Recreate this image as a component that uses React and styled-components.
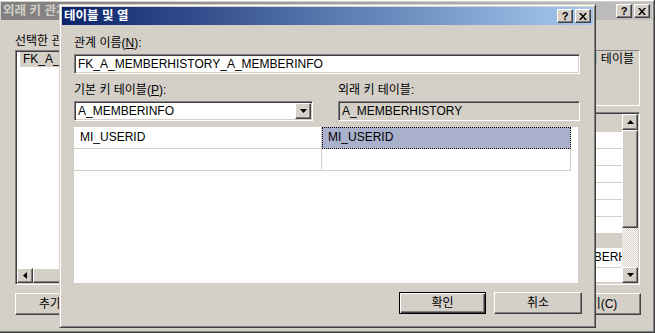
import styled, { createGlobalStyle, css } from "styled-components";

const FACE = "#d4d0c8";

const GlobalStyle = createGlobalStyle`
  html, body {
    margin: 0;
    padding: 0;
    background: #d4d0c8;
    overflow: hidden;
  }
  body {
    font-family: "Liberation Sans", "Noto Sans CJK KR", sans-serif;
    font-size: 12px;
    line-height: 14px;
    color: #000;
  }
`;

const raised = css`
  border: 1px solid;
  border-color: #fff #404040 #404040 #fff;
  box-shadow: inset -1px -1px #808080;
  background: ${FACE};
`;

const sunken = css`
  border: 1px solid;
  border-color: #808080 #fff #fff #808080;
  box-shadow: inset 1px 1px #404040, inset -1px -1px ${FACE};
`;

const Desktop = styled.div`
  position: relative;
  width: 655px;
  height: 333px;
  overflow: hidden;
`;

const Window = styled.div`
  position: absolute;
  left: ${p => p.$x}px;
  top: ${p => p.$y}px;
  width: ${p => p.$w}px;
  height: ${p => p.$h}px;
  box-sizing: border-box;
  display: flex;
  flex-direction: column;
  padding: 2px;
  background: ${FACE};
  border: 1px solid;
  border-color: ${FACE} #404040 #404040 ${FACE};
  box-shadow: inset 1px 1px #fff, inset -1px -1px #808080;
`;

const TitleBar = styled.div`
  flex: none;
  height: 18px;
  display: flex;
  align-items: center;
  justify-content: space-between;
  padding: 0 2px;
  background: ${p => p.$active
    ? "linear-gradient(to right, #0a246a, #a6caf0)"
    : "linear-gradient(to right, #808080, #c0c0c0)"};
  color: ${p => (p.$active ? "#fff" : FACE)};
  font-weight: bold;
  font-size: 12.5px;
  white-space: nowrap;
`;

const TitleButtons = styled.div`
  display: flex;
  gap: 2px;
`;

const CaptionButton = styled.div`
  ${raised};
  box-sizing: border-box;
  width: 16px;
  height: 14px;
  display: flex;
  align-items: center;
  justify-content: center;
  color: #000;
  font-family: "Liberation Sans", sans-serif;
  font-size: 11px;
  font-weight: bold;
  line-height: 12px;
`;

const BackBody = styled.div`
  flex: 1;
  display: flex;
  justify-content: space-between;
  padding: 14px 11px 0 14px;
`;

const Column = styled.div`
  display: flex;
  flex-direction: column;
  width: ${p => p.$w}px;
  padding-top: ${p => p.$top || 0}px;
`;

const Label = styled.div`
  height: 14px;
  line-height: 14px;
  margin-bottom: ${p => p.$gap ?? 4}px;
  white-space: nowrap;
`;

const ListBox = styled.div`
  ${sunken};
  box-sizing: border-box;
  height: 235px;
  background: #fff;
  display: flex;
  flex-direction: column;
  padding: 1px;
`;

const ListItems = styled.div`
  flex: 1;
  overflow: hidden;
`;

const ListItem = styled.div`
  margin-left: 3px;
  padding-left: 3px;
  height: 15px;
  line-height: 15px;
  white-space: nowrap;
  background: ${p => (p.$selected ? FACE : "transparent")};
`;

const HScroll = styled.div`
  display: flex;
  height: 15px;
`;

const ScrollButton = styled.div`
  ${raised};
  box-sizing: border-box;
  flex: none;
  width: 16px;
  height: ${p => p.$h || 16}px;
  display: flex;
  align-items: center;
  justify-content: center;
`;

const Thumb = styled.div`
  ${raised};
  box-sizing: border-box;
  flex: none;
  width: ${p => (p.$w ? `${p.$w}px` : "auto")};
  height: ${p => (p.$h ? `${p.$h}px` : "auto")};
`;

const Track = styled.div`
  flex: 1;
  background: repeating-conic-gradient(#ffffff 0 25%, ${FACE} 0 50%) 0 0 / 2px 2px;
`;

const PushButton = styled.button`
  ${raised};
  box-sizing: border-box;
  width: ${p => p.$w}px;
  height: 22px;
  padding: 0;
  font: inherit;
  color: #000;
  white-space: nowrap;
  align-self: ${p => p.$align || "auto"};
  margin-top: ${p => p.$top || 0}px;
  ${p => p.$default && css`
    border-color: #000;
    box-shadow: inset 1px 1px #fff, inset -1px -1px #404040, inset -2px -2px #808080;
  `}
`;

const InfoBox = styled.div`
  box-sizing: border-box;
  height: 56px;
  margin: 0 1px 6px 0;
  border: 1px solid;
  border-color: #808080 #fff #fff #808080;
  padding: 1px 5px 0 0;
  text-align: right;
  white-space: nowrap;
`;

const PropGrid = styled.div`
  ${sunken};
  box-sizing: border-box;
  height: 173px;
  margin-right: 1px;
  padding: 1px;
  display: flex;
  background: ${FACE};
`;

const PropRows = styled.div`
  flex: 1;
  overflow: hidden;
  display: flex;
  flex-direction: column;
`;

const PropRow = styled.div`
  box-sizing: border-box;
  flex: none;
  height: ${p => p.$h}px;
  line-height: ${p => p.$h - 1}px;
  padding-left: 1px;
  white-space: nowrap;
  background: ${p => (p.$gray ? FACE : "#fff")};
  border-bottom: ${p => (p.$gray ? "none" : `1px solid ${FACE}`)};
`;

const VScroll = styled.div`
  width: 16px;
  display: flex;
  flex-direction: column;
`;

const FrontBody = styled.div`
  flex: 1;
  display: flex;
  flex-direction: column;
  padding: 11px 13px 0 12px;
`;

const Field = styled.div`
  ${sunken};
  box-sizing: border-box;
  height: 20px;
  display: flex;
  align-items: center;
  padding: 1px 1px 1px 3px;
  background: ${p => (p.$readOnly ? FACE : "#fff")};
  white-space: nowrap;
  overflow: hidden;
`;

const FieldText = styled.span`
  flex: 1;
  line-height: 16px;
`;

const FieldRow = styled.div`
  display: flex;
  justify-content: space-between;
  margin-top: 9px;
`;

const FieldGroup = styled.div`
  width: ${p => p.$w}px;
  display: flex;
  flex-direction: column;
`;

const MapGrid = styled.div`
  margin-top: 6px;
  width: 504px;
  height: 156px;
  background: #fff;
  display: grid;
  grid-template-columns: 248px 249px;
  grid-auto-rows: 22px;
  align-content: start;
`;

const MapCell = styled.div`
  box-sizing: border-box;
  border-right: 1px solid ${FACE};
  border-bottom: 1px solid ${FACE};
  padding-left: 6px;
  line-height: 21px;
  white-space: nowrap;
  ${p => p.$selected && css`
    background: #a8b0cb;
    outline: 1px dotted #000;
    outline-offset: -1px;
  `}
`;

const ButtonRow = styled.div`
  display: flex;
  justify-content: flex-end;
  gap: 8px;
  margin: 9px -2px 0 0;
`;

function Arrow({ dir }) {
  const shapes = {
    down: { w: 7, h: 4, pts: "0,0 7,0 3.5,4" },
    up: { w: 7, h: 4, pts: "0,4 7,4 3.5,0" },
    left: { w: 4, h: 7, pts: "4,0 4,7 0,3.5" },
  };
  const s = shapes[dir];
  return (
    <svg width={s.w} height={s.h} viewBox={`0 0 ${s.w} ${s.h}`}>
      <polygon points={s.pts} fill="#000" />
    </svg>
  );
}

function CloseGlyph() {
  return (
    <svg width="8" height="7" viewBox="0 0 8 7">
      <path d="M0 0h2l2 2.4L6 0h2L5 3.5 8 7H6L4 4.6 2 7H0l3-3.5z" fill="#000" />
    </svg>
  );
}

function Caption({ title, active }) {
  return (
    <TitleBar $active={active}>
      <span>{title}</span>
      <TitleButtons>
        <CaptionButton>?</CaptionButton>
        <CaptionButton><CloseGlyph /></CaptionButton>
      </TitleButtons>
    </TitleBar>
  );
}

export default function App() {
  return (
    <Desktop>
      <GlobalStyle />
      <Window $x={-2} $y={-1} $w={657} $h={334}>
        <Caption title="외래 키 관계" />
        <BackBody>
          <Column $w={200}>
            <Label $gap={2}>선택한 관계(S):</Label>
            <ListBox>
              <ListItems>
                <ListItem $selected>FK_A_MEMBERHISTORY_A_MEMBERINFO</ListItem>
              </ListItems>
              <HScroll>
                <ScrollButton $h={15}><Arrow dir="left" /></ScrollButton>
                <Thumb $w={120} />
                <Track />
              </HScroll>
            </ListBox>
            <PushButton $w={86} $top={8}>추가(A)</PushButton>
          </Column>
          <Column $w={93} $top={16}>
            <InfoBox>외래 키 테이블</InfoBox>
            <PropGrid>
              <PropRows>
                <PropRow $h={18} $gray />
                {[0, 1, 2, 3, 4, 5].map(i => <PropRow key={i} $h={17} />)}
                <PropRow $h={14} $gray />
                <PropRow $h={20}>A_MEMBERHISTORY</PropRow>
                <PropRow $h={15} />
              </PropRows>
              <VScroll>
                <ScrollButton><Arrow dir="up" /></ScrollButton>
                <Thumb $h={98} />
                <Track />
                <ScrollButton><Arrow dir="down" /></ScrollButton>
              </VScroll>
            </PropGrid>
            <PushButton $w={86} $top={8} $align="flex-end">닫기(C)</PushButton>
          </Column>
        </BackBody>
      </Window>

      <Window $x={59} $y={4} $w={537} $h={324}>
        <Caption title="테이블 및 열" active />
        <FrontBody>
          <Label>관계 이름(<u>N</u>):</Label>
          <Field>
            <FieldText>FK_A_MEMBERHISTORY_A_MEMBERINFO</FieldText>
          </Field>
          <FieldRow>
            <FieldGroup $w={239}>
              <Label>기본 키 테이블(<u>P</u>):</Label>
              <Field>
                <FieldText>A_MEMBERINFO</FieldText>
                <ScrollButton><Arrow dir="down" /></ScrollButton>
              </Field>
            </FieldGroup>
            <FieldGroup $w={242}>
              <Label>외래 키 테이블:</Label>
              <Field $readOnly>
                <FieldText>A_MEMBERHISTORY</FieldText>
              </Field>
            </FieldGroup>
          </FieldRow>
          <MapGrid>
            <MapCell>MI_USERID</MapCell>
            <MapCell $selected>MI_USERID</MapCell>
            <MapCell />
            <MapCell />
          </MapGrid>
          <ButtonRow>
            <PushButton $w={87} $default>확인</PushButton>
            <PushButton $w={88}>취소</PushButton>
          </ButtonRow>
        </FrontBody>
      </Window>
    </Desktop>
  );
}
